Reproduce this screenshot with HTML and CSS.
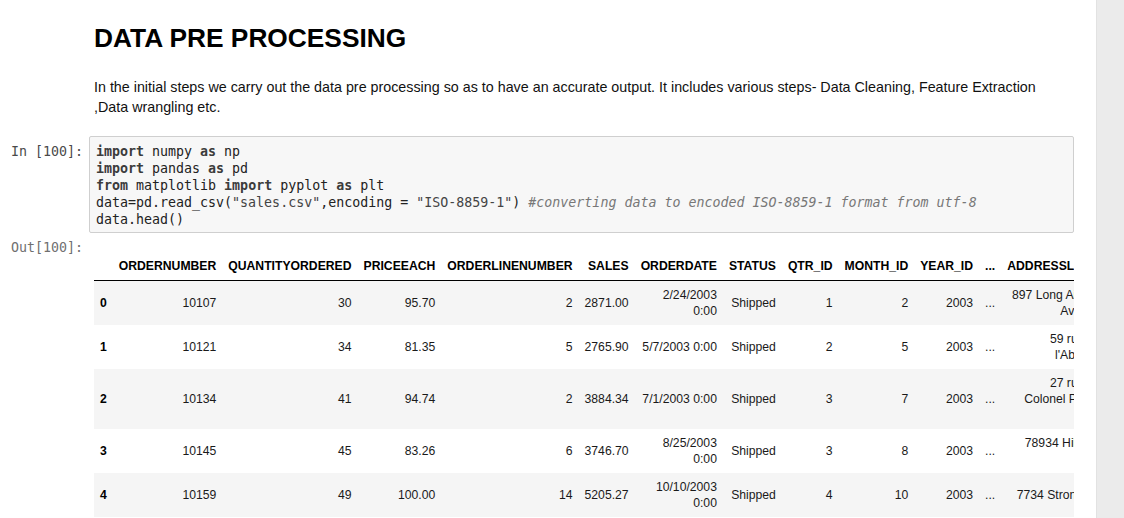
FILE: index.html
```html
<!DOCTYPE html>
<html>
<head>
<meta charset="utf-8">
<title>Notebook</title>
<link rel="stylesheet" href="styles.css">
</head>
<body>
<div class="page">
  <div class="notebook">
    <div class="cell text-cell">
      <div class="prompt"></div>
      <div class="text-body">
        <h1 class="title">DATA PRE PROCESSING</h1>
        <p class="para">In the initial steps we carry out the data pre processing so as to have an accurate output. It includes various steps- Data Cleaning, Feature Extraction ,Data wrangling etc.</p>
      </div>
    </div>
    <div class="code-cell">
      <div class="cell">
        <div class="prompt in-prompt">In&nbsp;[100]:</div>
<pre class="input-area"><span class="kw">import</span> numpy <span class="kw">as</span> np
<span class="kw">import</span> pandas <span class="kw">as</span> pd
<span class="kw">from</span> matplotlib <span class="kw">import</span> pyplot <span class="kw">as</span> plt
data=pd.read_csv(<span class="st">"sales.csv"</span>,encoding = <span class="st">"ISO-8859-1"</span>) <span class="cm">#converting data to encoded ISO-8859-1 format from utf-8</span>
data.head()</pre>
      </div>
      <div class="cell output-row">
        <div class="prompt out-prompt">Out[100]:</div>
        <div class="output-area">
          <div class="df-wrap">
            <table class="df">
              <thead>
                <tr>
                  <th></th><th>ORDERNUMBER</th><th>QUANTITYORDERED</th><th>PRICEEACH</th><th>ORDERLINENUMBER</th><th>SALES</th><th>ORDERDATE</th><th>STATUS</th><th>QTR_ID</th><th>MONTH_ID</th><th>YEAR_ID</th><th>...</th><th>ADDRESSLINE1</th><th>ADDRESSLINE2</th><th>CITY</th><th>STATE</th><th>POSTALCODE</th><th>COUNTRY</th><th>TERRITORY</th><th>CONTACTLASTNAME</th><th>CONTACTFIRSTNAME</th><th>DEALSIZE</th>
                </tr>
              </thead>
              <tbody>
                <tr>
                  <th>0</th><td>10107</td><td>30</td><td>95.70</td><td>2</td><td>2871.00</td><td>2/24/2003 0:00</td><td>Shipped</td><td>1</td><td>2</td><td>2003</td><td>...</td><td>897 Long Airport Avenue</td><td>NaN</td><td>NYC</td><td>NY</td><td>10022</td><td>USA</td><td>NaN</td><td>Yu</td><td>Kwai</td><td>Small</td>
                </tr>
                <tr>
                  <th>1</th><td>10121</td><td>34</td><td>81.35</td><td>5</td><td>2765.90</td><td>5/7/2003 0:00</td><td>Shipped</td><td>2</td><td>5</td><td>2003</td><td>...</td><td>59 rue de l'Abbaye</td><td>NaN</td><td>Reims</td><td>NaN</td><td>51100</td><td>France</td><td>EMEA</td><td>Henriot</td><td>Paul</td><td>Small</td>
                </tr>
                <tr>
                  <th>2</th><td>10134</td><td>41</td><td>94.74</td><td>2</td><td>3884.34</td><td>7/1/2003 0:00</td><td>Shipped</td><td>3</td><td>7</td><td>2003</td><td>...</td><td>27 rue du Colonel Pierre Avia</td><td>NaN</td><td>Paris</td><td>NaN</td><td>75508</td><td>France</td><td>EMEA</td><td>Da Cunha</td><td>Daniel</td><td>Medium</td>
                </tr>
                <tr>
                  <th>3</th><td>10145</td><td>45</td><td>83.26</td><td>6</td><td>3746.70</td><td>8/25/2003 0:00</td><td>Shipped</td><td>3</td><td>8</td><td>2003</td><td>...</td><td>78934 Hillside Dr.</td><td>NaN</td><td>Pasadena</td><td>CA</td><td>90003</td><td>USA</td><td>NaN</td><td>Young</td><td>Julie</td><td>Medium</td>
                </tr>
                <tr>
                  <th>4</th><td>10159</td><td>49</td><td>100.00</td><td>14</td><td>5205.27</td><td>10/10/2003 0:00</td><td>Shipped</td><td>4</td><td>10</td><td>2003</td><td>...</td><td>7734 Strong St.</td><td>NaN</td><td>San Francisco</td><td>CA</td><td>NaN</td><td>USA</td><td>NaN</td><td>Brown</td><td>Julie</td><td>Medium</td>
                </tr>
              </tbody>
            </table>
          </div>
        </div>
      </div>
    </div>
  </div>
  <div class="gutter"></div>
</div>
</body>
</html>
```

FILE: styles.css
```css
html, body {
  margin: 0;
  padding: 0;
  height: 100%;
}

body {
  overflow: hidden;
  background: #ebebeb;
  font-family: "Liberation Sans", Arial, sans-serif;
  color: #000;
}

.page {
  display: flex;
  height: 518px;
}

.notebook {
  flex: 0 0 1096px;
  box-sizing: border-box;
  background: #fff;
  padding: 23px 22px 0 0;
  overflow: hidden;
}

.gutter {
  flex: 1;
  background: #ebebeb;
  border-left: 1px solid #e2e2e2;
}

.cell {
  display: flex;
}

.prompt {
  flex: 0 0 89px;
  box-sizing: border-box;
  padding-right: 6px;
  text-align: right;
  font-family: "DejaVu Sans Mono", monospace;
  font-size: 13.3px;
  line-height: 17px;
  white-space: nowrap;
}

.in-prompt {
  padding-top: 7px;
  color: #4a4a4a;
}

.out-prompt {
  padding-top: 1px;
  color: #707070;
}

.text-body {
  flex: 1;
  min-width: 0;
  padding: 0 8px 0 5px;
}

.title {
  margin: 0;
  font-size: 26.3px;
  line-height: 30px;
  font-weight: bold;
  color: #000;
}

.para {
  margin: 24px 0 0;
  font-size: 14.3px;
  line-height: 20px;
  color: #111;
}

.code-cell {
  margin-top: 19px;
}

.input-area {
  flex: 1;
  min-width: 0;
  margin: 0;
  padding: 6px 6px 4px;
  background: #f7f7f7;
  border: 1px solid #cfcfcf;
  border-radius: 2px;
  font-family: "DejaVu Sans Mono", monospace;
  font-size: 13.3px;
  line-height: 17px;
  color: #222;
  white-space: pre;
  overflow: hidden;
}

.kw {
  font-weight: bold;
  color: #3c3c3c;
}

.st {
  color: #444;
}

.cm {
  font-style: italic;
  color: #777;
}

.output-row {
  margin-top: 5px;
}

.output-area {
  flex: 1;
  min-width: 0;
  padding-left: 5px;
}

.df-wrap {
  overflow: hidden;
}

.df {
  margin-top: 14px;
  border-collapse: collapse;
  border-spacing: 0;
  font-size: 12.2px;
  line-height: 16px;
  color: #000;
}

.df thead {
  border-bottom: 1px solid #000;
}

.df th,
.df td {
  padding: 6px;
  text-align: right;
  vertical-align: middle;
}

.df td {
  color: #1a1a1a;
}

.df th {
  font-weight: bold;
}

.df thead th {
  vertical-align: bottom;
}

.df tbody th {
  text-align: left;
}

.df tbody tr:nth-child(odd) {
  background: #f5f5f5;
}
```
